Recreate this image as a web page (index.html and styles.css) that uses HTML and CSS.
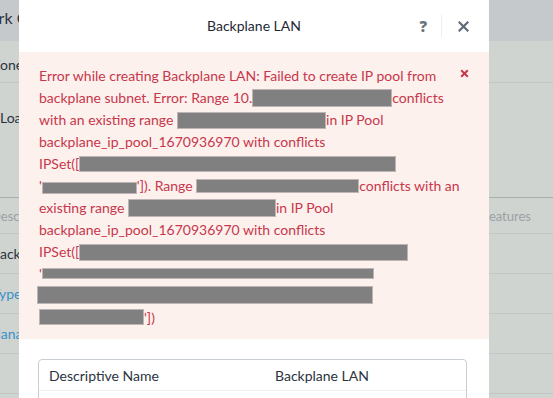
FILE: index.html
```html
<!DOCTYPE html>
<html lang="en">
<head>
  <meta charset="UTF-8" />
  <title>Backplane LAN</title>
  <link rel="stylesheet" href="styles.css">
</head>
<body>
  <!-- Page behind the dialog -->
  <div class="page">
    <div class="topbar">
      <span class="left-text page-title">Network Config</span>
    </div>
    <div class="row row-zone"><span class="left-text off-z">Zone</span></div>
    <div class="row row-load"><span class="left-text">Load</span></div>
    <div class="row row-head">
      <span class="left-text muted off-d">Description</span>
      <span class="right-text muted">Features</span>
    </div>
    <div class="row row-item"><span class="left-text off-b">Backplane</span></div>
    <div class="row row-item"><span class="left-text link off-t">Type</span></div>
    <div class="row row-item"><span class="left-text link off-m">Manage</span></div>
    <div class="row row-item"></div>
  </div>

  <!-- Dialog -->
  <div class="modal">
    <div class="modal-header">
      <div class="modal-title">Backplane LAN</div>
      <div class="modal-actions">
        <span class="help">?</span>
        <span class="sep"></span>
        <svg class="close" width="11" height="11" viewBox="0 0 11 11">
          <path d="M1.5 1.5 L9.5 9.5 M9.5 1.5 L1.5 9.5" stroke="#5f6b78" stroke-width="2.2" stroke-linecap="square" />
        </svg>
      </div>
    </div>

    <div class="alert">
      <svg class="alert-close" width="9" height="9" viewBox="0 0 9 9">
        <path d="M1.2 1.2 L7.8 7.8 M7.8 1.2 L1.2 7.8" stroke="#c8374b" stroke-width="2" />
      </svg>
      <p class="alert-text">
        Error while creating Backplane LAN: Failed to create IP pool from<br>
        backplane subnet. Error: Range 10.<span class="redact r-a"></span>conflicts<br>
        with an existing range <span class="redact r-b"></span>in IP Pool<br>
        backplane_ip_pool_1670936970 with conflicts<br>
        IPSet([<span class="redact r-c"></span><br>
        '<span class="redact r-d"></span>']). Range <span class="redact r-e"></span>conflicts with an<br>
        existing range <span class="redact r-f"></span>in IP Pool<br>
        backplane_ip_pool_1670936970 with conflicts<br>
        IPSet([<span class="redact r-g"></span><br>
        '<span class="redact r-h"></span><br>
        <span class="redact r-i"></span><br>
        <span class="redact r-j"></span>'])
      </p>
    </div>

    <div class="modal-body">
      <div class="details">
        <div class="details-row">
          <span class="details-label">Descriptive Name</span>
          <span class="details-value">Backplane LAN</span>
        </div>
        <div class="details-row"></div>
      </div>
    </div>
  </div>
</body>
</html>
```

FILE: styles.css
```css
* {
  box-sizing: border-box;
}

body {
  margin: 0;
  height: 398px;
  overflow: hidden;
  position: relative;
  background-color: #d0d4d1;
  font-family: Lato, "Open Sans", sans-serif;
  font-size: 14px;
  color: #2b333d;
}

/* background page (already dimmed by the overlay) */
.page {
  width: 100%;
}

.topbar {
  height: 41px;
  background-color: #c6c9cc;
  display: flex;
  align-items: center;
  padding-bottom: 6px;
}

.page-title {
  font-size: 16px;
  margin-left: -49px;
}

.row {
  display: flex;
  align-items: center;
  justify-content: space-between;
  border-bottom: 1px solid #c2c7c6;
}

.row-zone {
  height: 42px;
  padding-top: 6px;
}

.row-load {
  height: 115px;
  align-items: flex-start;
  padding-top: 26px;
  border-bottom-color: #a9aeb0;
}

.row-head {
  height: 36px;
}

.row-item {
  height: 40px;
}

.left-text {
  white-space: nowrap;
}

.off-z { margin-left: -8px; }
.off-d { margin-left: -9px; }
.off-b { margin-left: -9px; }
.off-t { margin-left: -8px; }
.off-m { margin-left: -12px; }

.right-text {
  margin-right: 22px;
}

.muted {
  color: #9ba1a3;
  font-size: 13px;
}

.link {
  color: #3b90c9;
}

/* dialog */
.modal {
  position: absolute;
  top: 0;
  left: 19px;
  width: 470px;
  height: 420px;
  background: #ffffff;
}

.modal-header {
  height: 52px;
  display: flex;
  align-items: center;
  justify-content: center;
  position: relative;
}

.modal-title {
  font-size: 14px;
  color: #1f2933;
  padding-bottom: 1px;
}

.modal-actions {
  position: absolute;
  right: 20px;
  top: 15px;
  height: 22px;
  display: flex;
  align-items: center;
}

.help {
  font-family: "Open Sans", sans-serif;
  font-weight: 800;
  font-size: 15px;
  color: #6b7582;
  margin-right: 14px;
}

.sep {
  width: 1px;
  height: 22px;
  background: #eeeeee;
  margin-right: 16px;
}

.alert {
  position: relative;
  background-color: #fdf1ee;
  padding: 13px 30px 10px 20px;
}

.alert-close {
  position: absolute;
  right: 20px;
  top: 17px;
}

.alert-text {
  margin: 0;
  color: #c8374b;
  font-size: 14px;
  line-height: 22px;
  white-space: nowrap;
}

.redact {
  display: inline-block;
  vertical-align: top;
  background: #808080;
  border: 1px solid #bdb5b5;
}

.r-a { width: 140px; height: 18px; margin-top: 2px; }
.r-b { width: 149px; height: 17px; margin-top: 3px; }
.r-c { width: 317px; height: 16px; margin-top: 3px; }
.r-d { width: 95px;  height: 12px; margin-top: 7px; }
.r-e { width: 163px; height: 14px; margin-top: 4px; }
.r-f { width: 148px; height: 18px; margin-top: 2px; }
.r-g { width: 329px; height: 17px; margin-top: 3px; }
.r-h { width: 332px; height: 11px; margin-top: 5px; }
.r-i { width: 336px; height: 18px; margin-top: 1px; margin-left: -2px; }
.r-j { width: 105px; height: 16px; margin-top: 2px; }

.modal-body {
  padding: 20px 22px 0 19px;
}

.details {
  border: 1px solid #c9cdd4;
  border-radius: 4px;
}

.details-row {
  display: flex;
  height: 31px;
  align-items: center;
  padding-left: 10px;
  border-bottom: 1px solid #efefef;
  font-size: 14px;
  color: #2b333d;
}

.details-label {
  width: 226px;
}
```
